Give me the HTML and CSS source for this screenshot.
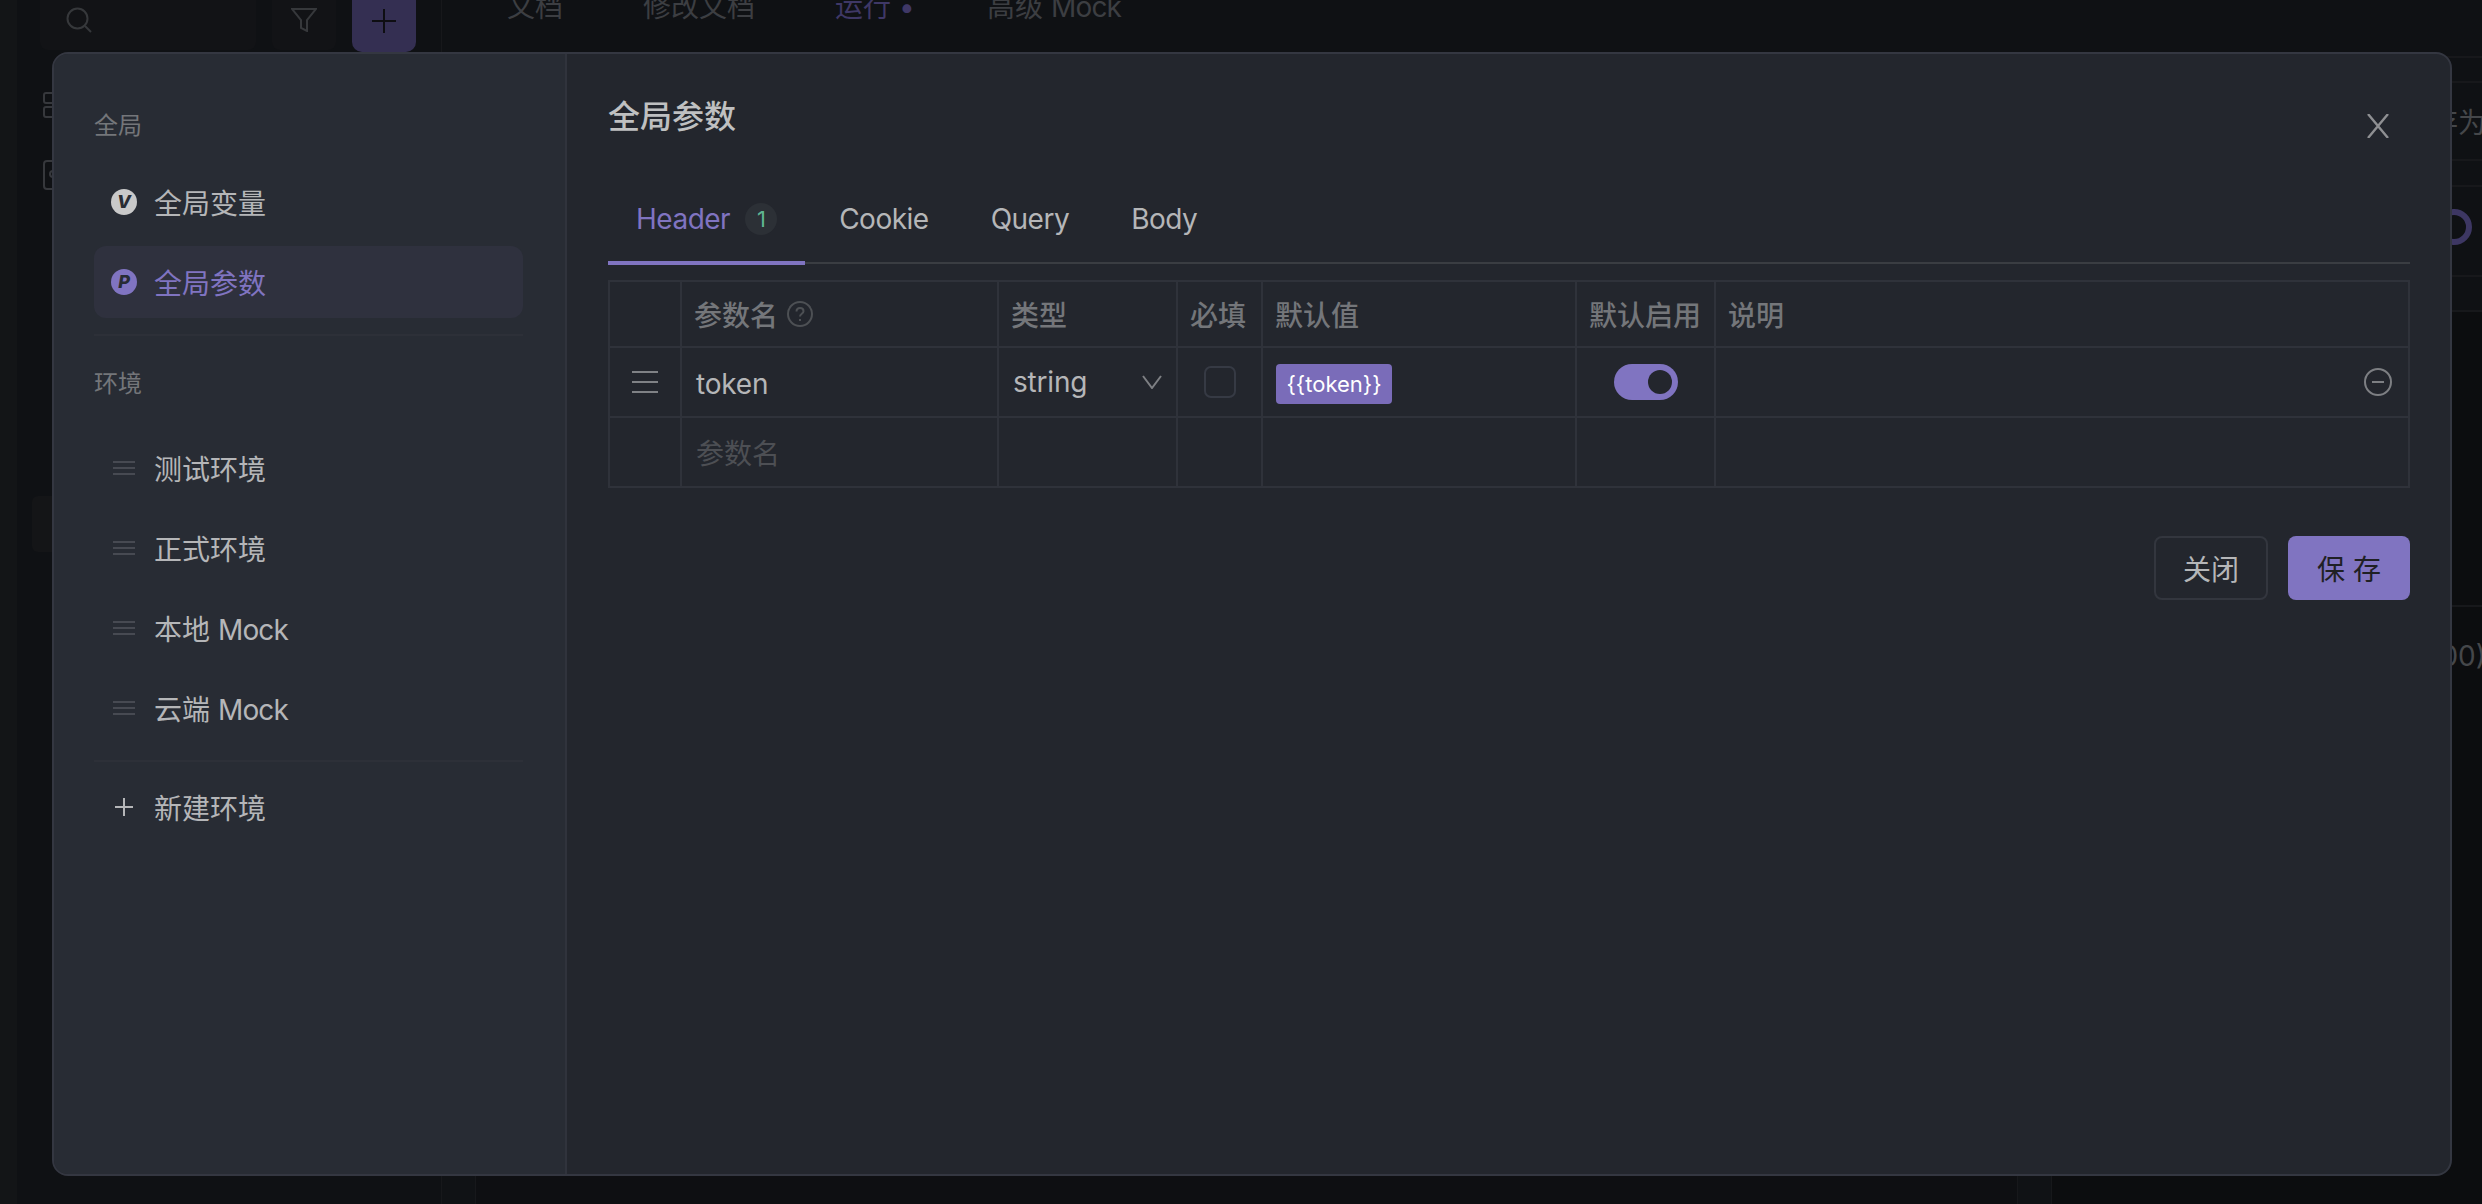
FILE: index.html
```html
<!DOCTYPE html>
<html lang="en">

<head>
    <meta charset="UTF-8" />
    <title>全局参数</title>
    <link rel="stylesheet" href="styles.css">
</head>

<body>
    <!-- dimmed page behind the modal -->
    <div class="app">
        <div class="rail"></div>
        <div class="tree">
            <div class="tree-tools">
                <div class="search-box">
                    <svg width="26" height="26" viewBox="0 0 26 26" fill="none" stroke="#36383b" stroke-width="2">
                        <circle cx="11.5" cy="11.5" r="10" />
                        <path d="M19 19l6 6" />
                    </svg>
                </div>
                <div class="filter-box">
                    <svg width="26" height="24" viewBox="0 0 26 24" fill="none" stroke="#36383b" stroke-width="2">
                        <path d="M1 1h24l-9 11v11l-6-3v-8z" />
                    </svg>
                </div>
                <div class="add-box">
                    <svg width="24" height="24" viewBox="0 0 24 24" stroke="#0e0e12" stroke-width="2">
                        <path d="M12 0v24M0 12h24" />
                    </svg>
                </div>
            </div>
            <div class="tree-icons">
                <svg width="30" height="26" viewBox="0 0 30 26" fill="none" stroke="#36383c" stroke-width="2">
                    <rect x="1" y="1" width="26" height="10" rx="2" />
                    <rect x="1" y="15" width="26" height="10" rx="2" />
                </svg>
                <svg class="tree-icon-key" width="30" height="30" viewBox="0 0 30 30" fill="none" stroke="#36383c" stroke-width="2">
                    <rect x="1" y="1" width="28" height="28" rx="3" />
                    <circle cx="10" cy="14" r="3" />
                </svg>
            </div>
            <div class="tree-hover"></div>
        </div>
        <div class="content">
            <div class="page-tabs">
                <span>文档</span>
                <span>修改文档</span>
                <span class="page-tab-on">运行 •</span>
                <span>高级 <span class="latin">Mock</span></span>
            </div>
            <div class="page-body">
                <div class="gutter"></div>
                <div class="center"></div>
                <div class="gutter"></div>
                <div class="right">
                    <div class="right-row row-a"></div>
                    <div class="right-row row-b"></div>
                    <div class="right-row row-c"><span>存为</span></div>
                    <div class="right-row row-d"></div>
                    <div class="right-row row-e"><i class="ring"></i></div>
                    <div class="right-row row-f"></div>
                    <div class="right-row row-g"></div>
                    <div class="right-row row-h"><span>200)</span></div>
                </div>
            </div>
        </div>
    </div>

    <div class="modal">
        <aside class="modal-side">
            <div class="side-label first">全局</div>
            <div class="side-item">
                <span class="side-icon"><b class="letter">V</b></span>全局变量
            </div>
            <div class="side-item active">
                <span class="side-icon"><b class="letter">P</b></span>全局参数
            </div>
            <div class="side-line"></div>
            <div class="side-label second">环境</div>
            <div class="side-item">
                <span class="side-icon"><i class="handle"></i></span>测试环境
            </div>
            <div class="side-item">
                <span class="side-icon"><i class="handle"></i></span>正式环境
            </div>
            <div class="side-item">
                <span class="side-icon"><i class="handle"></i></span><span>本地 <span class="latin">Mock</span></span>
            </div>
            <div class="side-item">
                <span class="side-icon"><i class="handle"></i></span><span>云端 <span class="latin">Mock</span></span>
            </div>
            <div class="side-line"></div>
            <div class="side-item new-env">
                <span class="side-icon">
                    <svg width="18" height="18" viewBox="0 0 18 18" stroke="#b5b6b8" stroke-width="2">
                        <path d="M9 0v18M0 9h18" />
                    </svg>
                </span>新建环境
            </div>
        </aside>

        <main class="modal-main">
            <h2>全局参数</h2>
            <svg class="close-x" width="22" height="24" viewBox="0 0 22 24" stroke="#8e8f92" stroke-width="2.4">
                <path d="M1 0l20 24M21 0L1 24" />
            </svg>

            <div class="tabs">
                <div class="tab active">Header<span class="count">1</span></div>
                <div class="tab">Cookie</div>
                <div class="tab">Query</div>
                <div class="tab">Body</div>
            </div>

            <table class="params">
                <colgroup>
                    <col class="c-drag">
                    <col class="c-name">
                    <col class="c-type">
                    <col class="c-req">
                    <col class="c-def">
                    <col class="c-on">
                    <col class="c-desc">
                </colgroup>
                <thead>
                    <tr>
                        <th></th>
                        <th>
                            <span class="th-help">参数名
                                <svg width="26" height="26" viewBox="0 0 26 26" fill="none" stroke="#4d5054" stroke-width="2">
                                    <circle cx="13" cy="13" r="12" />
                                    <path d="M9.5 10.5c0-2 1.500-3.500 3.500-3.500s3.500 1.300 3.500 3.200c0 2.600-3.500 2.600-3.500 5.300" />
                                    <path d="M13 18v2" />
                                </svg>
                            </span>
                        </th>
                        <th>类型</th>
                        <th>必填</th>
                        <th>默认值</th>
                        <th>默认启用</th>
                        <th>说明</th>
                    </tr>
                </thead>
                <tbody>
                    <tr>
                        <td class="cell-center">
                            <svg class="drag" width="26" height="24" viewBox="0 0 26 24" stroke="#7f8185" stroke-width="2">
                                <path d="M0 2h26M0 12h26M0 22h26" />
                            </svg>
                        </td>
                        <td class="cell-text cell-token">token</td>
                        <td class="cell-type">
                            <div class="type-select"><span class="latin-soft">string</span>
                                <svg width="20" height="14" viewBox="0 0 20 14" fill="none" stroke="#7d7f83" stroke-width="2">
                                    <path d="M1 1l9 12 9-12" />
                                </svg>
                            </div>
                        </td>
                        <td class="cell-center"><span class="check"></span></td>
                        <td><span class="tag">{{token}}</span></td>
                        <td class="cell-center"><span class="switch"><i></i></span></td>
                        <td class="cell-end">
                            <svg width="28" height="28" viewBox="0 0 28 28" fill="none" stroke="#7d7f83" stroke-width="2">
                                <circle cx="14" cy="14" r="13" />
                                <path d="M8 14h12" />
                            </svg>
                        </td>
                    </tr>
                    <tr>
                        <td></td>
                        <td class="cell-text placeholder">参数名</td>
                        <td></td>
                        <td></td>
                        <td></td>
                        <td></td>
                        <td></td>
                    </tr>
                </tbody>
            </table>

            <div class="actions">
                <button class="btn">关闭</button>
                <button class="btn primary">保 存</button>
            </div>
        </main>
    </div>
</body>

</html>
```

FILE: styles.css
```css
:root {
    --page-bg: #0f1114;
    --side-bg: #282c34;
    --main-bg: #23262d;
    --line: #2f323a;
    --accent: #8074c1;
    --text: #b5b6b8;
    --muted: #74767a;
}

html,
body {
    margin: 0;
    height: 100%;
    overflow: hidden;
}

body {
    font-family: Inter, "Noto Sans CJK SC", sans-serif;
    background: var(--page-bg);
    color: var(--text);
    font-size: 28px;
}

/* page behind the modal */
.app {
    display: flex;
    height: 1204px;
    overflow: hidden;
}

.rail {
    width: 17px;
    background: #131517;
}

.tree {
    width: 401px;
    padding-left: 23px;
    border-right: 1px solid #17181b;
}

.tree-tools {
    display: flex;
    height: 50px;
}

.search-box,
.filter-box {
    height: 50px;
    padding-bottom: 10px;
    box-sizing: border-box;
    background: #121316;
    border-radius: 0 0 8px 8px;
    display: flex;
    align-items: center;
}

.search-box {
    width: 216px;
    padding-left: 26px;
}

.filter-box {
    width: 64px;
    margin-left: 16px;
    justify-content: center;
}

.add-box {
    width: 64px;
    height: 52px;
    margin-left: 16px;
    padding-bottom: 11px;
    box-sizing: border-box;
    background: #342f52;
    border-radius: 0 0 10px 10px;
    display: flex;
    align-items: center;
    justify-content: center;
}

.tree-icons {
    display: flex;
    flex-direction: column;
    margin: 42px 0 0 3px;
}

.tree-icon-key {
    margin-top: 42px;
}

.tree-hover {
    width: 60px;
    height: 56px;
    margin: 306px 0 0 -8px;
    background: #141517;
    border-radius: 6px;
}

.content {
    flex: 1;
    display: flex;
    flex-direction: column;
}

.page-tabs {
    height: 52px;
    display: flex;
    gap: 80px;
    padding-left: 65px;
    color: #3c3e42;
    line-height: 40px;
    margin-top: -13px;
    padding-bottom: 13px;
}

.page-tab-on {
    color: #3f3866;
    width: 74px;
    margin-right: -2px;
    white-space: nowrap;
}

.page-body {
    flex: 1;
    display: flex;
    background: #0c0d0f;
}

.gutter {
    width: 33px;
    background: #101215;
}

.center {
    width: 1541px;
    border-left: 1px solid #17181b;
    border-right: 1px solid #17181b;
    background: #0e0f12;
}

.right {
    flex: 1;
    display: flex;
    flex-direction: column;
    border-left: 1px solid #17181b;
    color: #45474a;
    overflow: hidden;
}

.right-row {
    display: flex;
    justify-content: flex-end;
    box-sizing: border-box;
    border-bottom: 2px solid #17181b;
    background: #0f1114;
}

.right-row span {
    white-space: nowrap;
    margin-right: -4px;
}

.row-a {
    height: 6px;
}

.row-b {
    height: 25px;
}

.row-c {
    height: 78px;
    align-items: center;
}

.row-d {
    height: 26px;
}

.row-e {
    height: 90px;
    padding-bottom: 8px;
    align-items: center;
}

.row-f {
    height: 35px;
}

.row-g {
    height: 295px;
    background: #0c0d0f;
}

.row-h {
    height: 140px;
    padding-top: 32px;
    border: 0;
    background: #0c0d0f;
}

.ring {
    width: 36px;
    height: 36px;
    margin-right: 10px;
    box-sizing: border-box;
    border: 6px solid #3d3763;
    border-radius: 50%;
}

/* modal */
.modal {
    position: fixed;
    left: 52px;
    top: 52px;
    width: 2400px;
    height: 1124px;
    box-sizing: border-box;
    display: flex;
    border: 2px solid #343741;
    border-radius: 16px;
    overflow: hidden;
    background: var(--main-bg);
}

.modal-side {
    width: 513px;
    box-sizing: border-box;
    padding: 0 42px 0 40px;
    background: var(--side-bg);
    border-right: 2px solid #30333c;
}

.side-label {
    height: 30px;
    line-height: 30px;
    font-size: 24px;
    color: var(--muted);
}

.side-label.first {
    margin: 57px 0 25px;
}

.side-label.second {
    margin: 33px 0 33px;
}

.side-item {
    height: 72px;
    display: flex;
    align-items: center;
    gap: 17px;
    padding-left: 17px;
    margin-bottom: 8px;
    border-radius: 12px;
}

.side-item.active {
    background: #2f313e;
    color: var(--accent);
}

.side-icon {
    width: 26px;
    height: 26px;
    flex: none;
    display: flex;
    align-items: center;
    justify-content: center;
}

.latin {
    letter-spacing: -0.8px;
}

.letter {
    width: 26px;
    height: 26px;
    border-radius: 50%;
    background: #c9c9c9;
    color: var(--side-bg);
    font-size: 18px;
    font-style: italic;
    font-weight: 800;
    line-height: 26px;
    text-align: center;
}

.active .letter {
    background: var(--accent);
}

.handle {
    position: relative;
    width: 22px;
    height: 10px;
    border-top: 2px solid #474a52;
    border-bottom: 2px solid #474a52;
}

.handle::after {
    content: "";
    position: absolute;
    left: 0;
    right: 0;
    top: 4px;
    height: 2px;
    background: #474a52;
}

.side-line {
    height: 2px;
    margin-top: 16px;
    background: #2d3038;
}

.new-env {
    margin-top: 9px;
}

.modal-main {
    position: relative;
    flex: 1;
    padding: 40px 40px 0 41px;
}

h2 {
    margin: 0;
    font-size: 32px;
    font-weight: 500;
    line-height: 46px;
    color: #bfc0c1;
}

.close-x {
    position: absolute;
    top: 60px;
    right: 61px;
}

.tabs {
    display: flex;
    gap: 6px;
    height: 90px;
    margin-top: 32px;
    border-bottom: 2px solid #3a3d42;
}

.tab {
    position: relative;
    display: flex;
    align-items: center;
    padding: 3px 28px 0;
    letter-spacing: -0.5px;
}

.tab.active {
    color: var(--accent);
}

.tab.active::after {
    content: "";
    position: absolute;
    left: 0;
    right: 0;
    bottom: -3px;
    height: 4px;
    background: var(--accent);
}

.count {
    width: 32px;
    height: 32px;
    margin-left: 15px;
    border-radius: 50%;
    background: #2c3036;
    color: #5fb592;
    font-size: 22px;
    line-height: 32px;
    text-align: center;
}

.params {
    width: 1802px;
    margin-top: 16px;
    border-collapse: collapse;
    table-layout: fixed;
}

.c-drag {
    width: 72px;
}

.c-name {
    width: 317px;
}

.c-type {
    width: 179px;
}

.c-req {
    width: 85px;
}

.c-def {
    width: 314px;
}

.c-on {
    width: 139px;
}

.params th,
.params td {
    border: 2px solid var(--line);
    padding: 0 12px;
    text-align: left;
    vertical-align: middle;
    box-sizing: border-box;
}

.params th {
    height: 66px;
    font-weight: 500;
    color: var(--muted);
    white-space: nowrap;
}

.params td {
    height: 70px;
}

.th-help {
    display: inline-flex;
    align-items: center;
    gap: 9px;
}

.params .cell-center {
    padding: 0;
}

.params .cell-text {
    padding-left: 14px;
}

.params .cell-token {
    padding-top: 3px;
    letter-spacing: -0.2px;
}

.placeholder {
    color: #4d4f54;
}

.drag {
    display: block;
    margin: 0 auto;
}

.params .cell-type {
    padding: 0 14px;
}

.type-select {
    display: flex;
    align-items: center;
    justify-content: space-between;
}

.latin-soft {
    letter-spacing: -0.2px;
}

.check {
    display: block;
    width: 32px;
    height: 32px;
    margin: 0 auto;
    box-sizing: border-box;
    border: 2px solid #363a44;
    border-radius: 7px;
}

.tag {
    display: block;
    height: 40px;
    width: 116px;
    margin: 4px 0 0 1px;
    background: #7a6cb9;
    color: #fff;
    border-radius: 4px;
    font-size: 22px;
    line-height: 40px;
    text-align: center;
}

.switch {
    display: flex;
    align-items: center;
    justify-content: flex-end;
    width: 64px;
    height: 36px;
    margin: 0 auto;
    padding-right: 6px;
    box-sizing: border-box;
    background: var(--accent);
    border-radius: 18px;
}

.switch i {
    width: 24px;
    height: 24px;
    border-radius: 50%;
    background: var(--main-bg);
}

.params .cell-end {
    padding-right: 16px;
}

.cell-end svg {
    display: block;
    margin-left: auto;
}

.actions {
    display: flex;
    justify-content: flex-end;
    gap: 20px;
    margin-top: 48px;
    width: 1802px;
}

.btn {
    height: 64px;
    width: 114px;
    border: 2px solid #33363e;
    border-radius: 8px;
    background: transparent;
    color: var(--text);
    font-family: inherit;
    font-size: 28px;
    padding: 0;
}

.btn.primary {
    width: 122px;
    border: 0;
    background: var(--accent);
    color: #1f2024;
}
```
